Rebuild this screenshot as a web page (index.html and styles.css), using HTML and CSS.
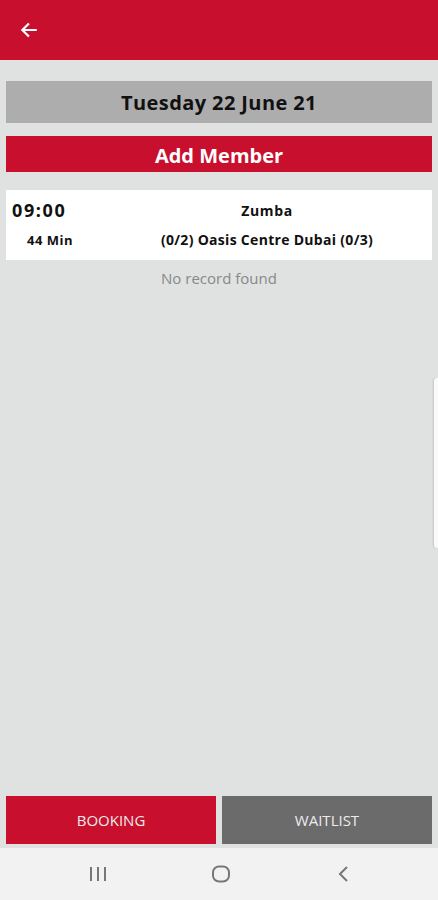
FILE: index.html
```html
<!DOCTYPE html>
<html lang="en">
<head>
    <meta charset="UTF-8">
    <meta name="viewport" content="width=device-width, initial-scale=1.0">
    <title>Class Booking</title>
    <link rel="stylesheet" href="styles.css">
</head>
<body>
    <div class="app">
        <header class="topbar">
            <svg class="back-icon" width="20" height="20" viewBox="0 0 24 24">
                <path d="M20 12H5M11 5l-7 7 7 7" fill="none" stroke="#fff" stroke-width="2.6" stroke-linecap="square"/>
            </svg>
        </header>

        <main class="content">
            <div class="date-bar">Tuesday 22 June 21</div>
            <button class="add-member">Add Member</button>

            <div class="class-card">
                <div class="class-row">
                    <span class="class-time">09:00</span>
                    <span class="class-name">Zumba</span>
                </div>
                <div class="class-row">
                    <span class="class-duration">44 Min</span>
                    <span class="class-place">(0/2) Oasis Centre Dubai (0/3)</span>
                </div>
            </div>

            <p class="empty">No record found</p>
            <div class="side-tab"></div>
        </main>

        <div class="tabs">
            <button class="tab tab-active">BOOKING</button>
            <button class="tab tab-muted">WAITLIST</button>
        </div>

        <nav class="navbar">
            <svg width="20" height="18" viewBox="0 0 20 18">
                <path d="M3 2v14M10 2v14M17 2v14" stroke="#777" stroke-width="2"/>
            </svg>
            <svg width="20" height="18" viewBox="0 0 20 18">
                <rect x="2" y="1.5" width="16" height="15" rx="6" fill="none" stroke="#777" stroke-width="2"/>
            </svg>
            <svg width="20" height="18" viewBox="0 0 20 18">
                <path d="M13 2L6 9l7 7" fill="none" stroke="#777" stroke-width="2"/>
            </svg>
        </nav>
    </div>
</body>
</html>
```

FILE: styles.css
```css
* {
    box-sizing: border-box;
}
body {
    margin: 0;
    font-family: "Open Sans", Arial, sans-serif;
    background-color: #e0e2e1;
}
.app {
    height: 900px;
    display: flex;
    flex-direction: column;
}
.topbar {
    height: 60px;
    background-color: #c8102e;
    display: flex;
    align-items: center;
    padding-left: 19px;
}
.content {
    flex: 1;
    padding: 21px 6px 0;
    position: relative;
}
.date-bar {
    height: 42px;
    background-color: #adadad;
    color: #111;
    font-size: 20px;
    font-weight: 700;
    letter-spacing: 0.4px;
    display: flex;
    align-items: center;
    justify-content: center;
}
.add-member {
    display: block;
    width: 100%;
    height: 36px;
    margin-top: 13px;
    border: none;
    background-color: #c8102e;
    color: #fff;
    font-family: inherit;
    font-size: 20px;
    font-weight: 700;
    padding: 2px 0 0;
}
.class-card {
    margin-top: 18px;
    height: 70px;
    background-color: #fff;
    padding: 8px 6px 0;
}
.class-row {
    display: grid;
    grid-template-columns: 96px 1fr;
    align-items: center;
}
.class-row + .class-row {
    margin-top: 8px;
}
.class-time {
    font-size: 18px;
    font-weight: 700;
    letter-spacing: 1.6px;
    color: #111;
}
.class-name,
.class-place {
    text-align: center;
    font-size: 14px;
    font-weight: 700;
    color: #111;
}
.class-name {
    letter-spacing: 0.6px;
}
.class-place {
    letter-spacing: 0.3px;
}
.class-duration {
    padding-left: 15px;
    font-size: 13px;
    font-weight: 700;
    letter-spacing: 0.5px;
    color: #111;
}
.empty {
    margin: 8px 0 0;
    text-align: center;
    font-size: 15px;
    color: #888;
}
.side-tab {
    position: absolute;
    right: 0;
    top: 318px;
    width: 4px;
    height: 170px;
    background-color: #fafafa;
    border-radius: 3px 0 0 3px;
    box-shadow: -1px 0 2px rgba(0, 0, 0, 0.12);
}
.tabs {
    display: flex;
    gap: 6px;
    padding: 0 6px 4px;
}
.tab {
    flex: 1;
    height: 48px;
    border: none;
    color: #ececec;
    font-family: inherit;
    font-size: 15px;
    font-weight: 400;
}
.tab-active {
    background-color: #c8102e;
}
.tab-muted {
    background-color: #6b6b6b;
}
.navbar {
    height: 52px;
    background-color: #f2f2f2;
    display: flex;
    align-items: center;
    justify-content: space-between;
    padding: 0 84px 0 88px;
}
```
